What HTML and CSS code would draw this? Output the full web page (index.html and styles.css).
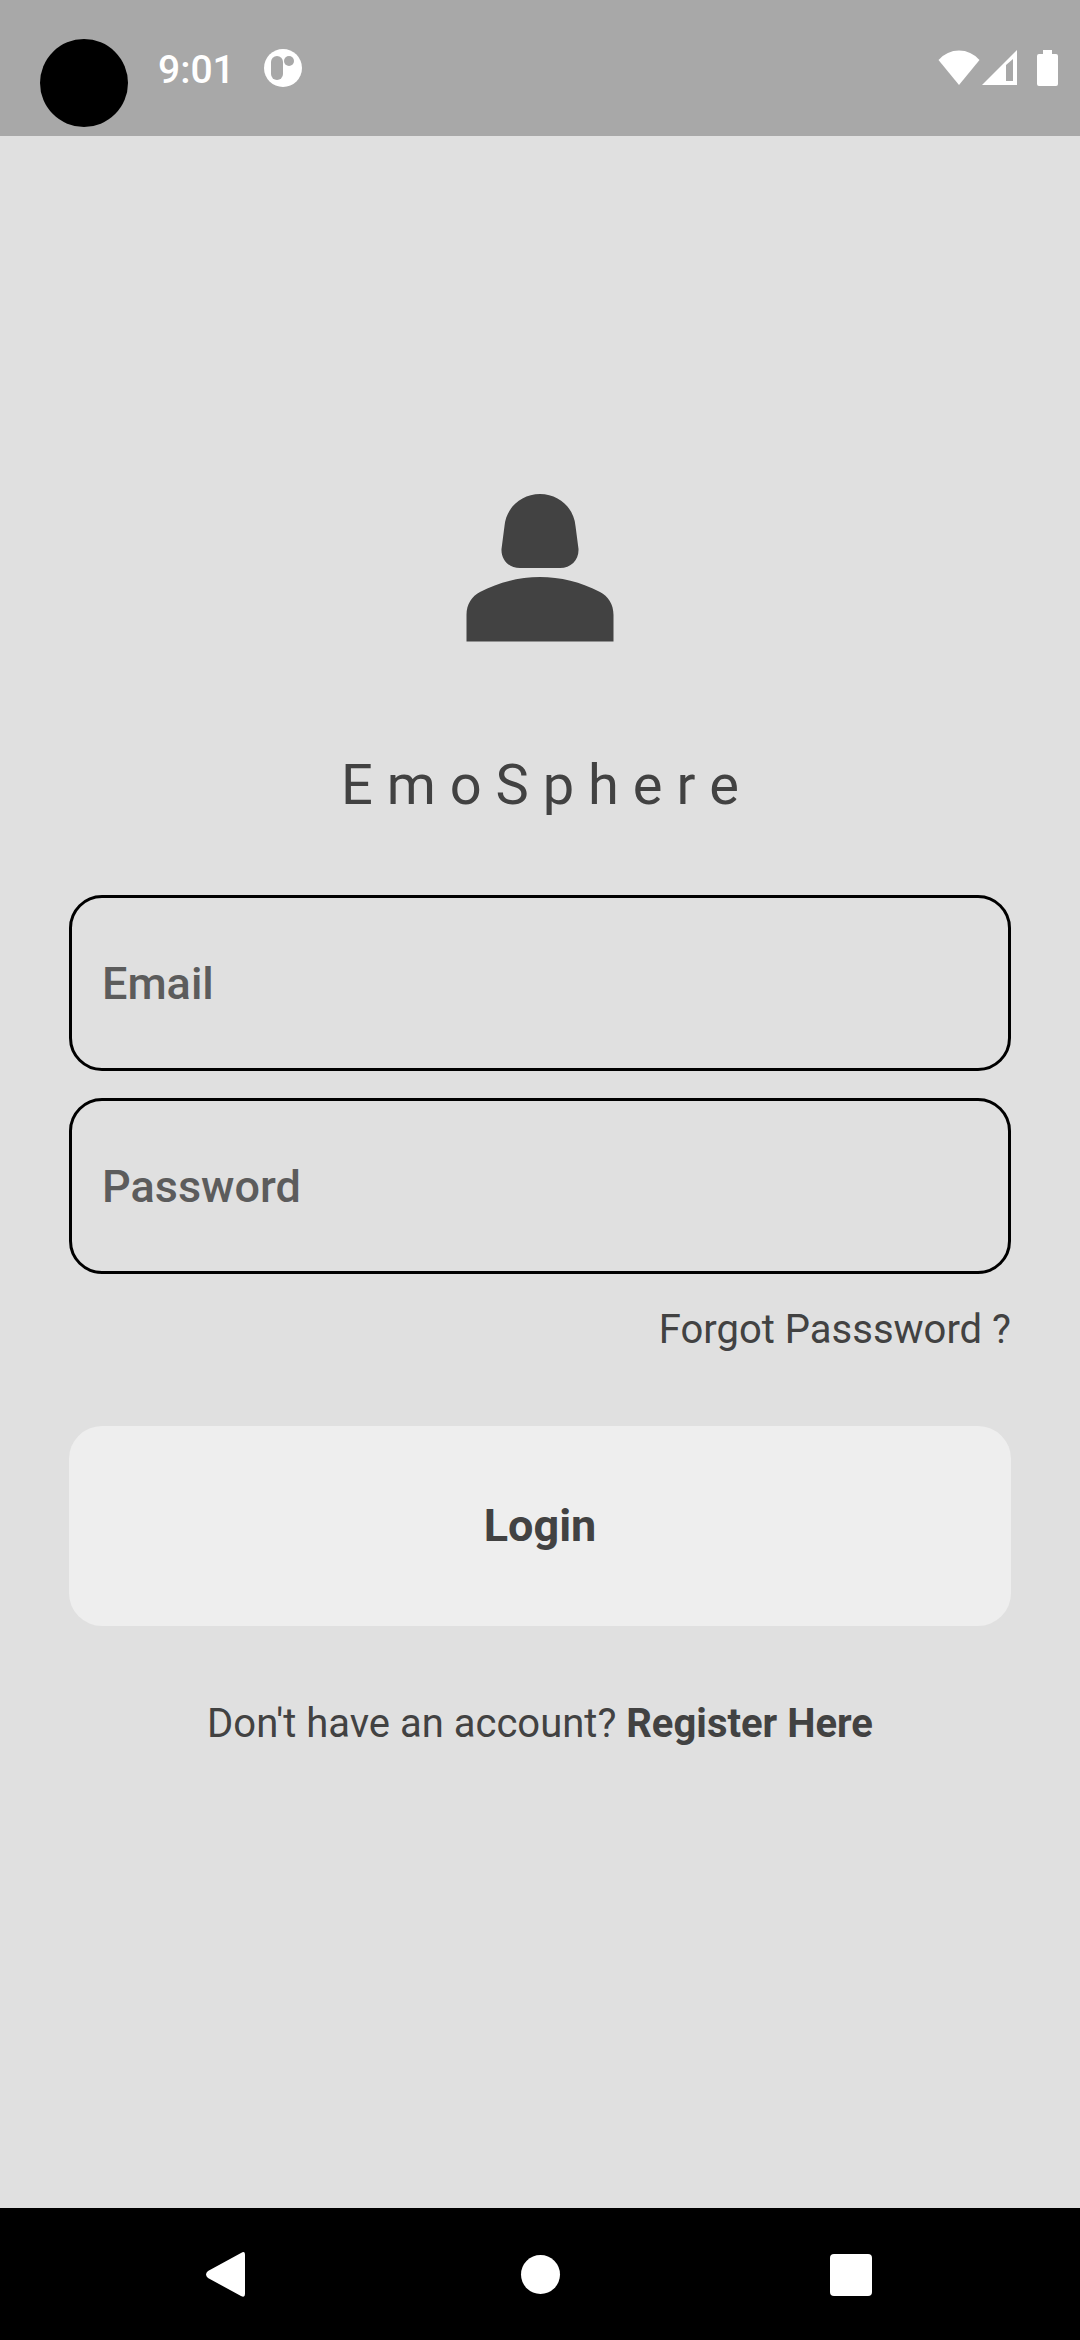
FILE: index.html
```html
<!DOCTYPE html>
<html lang="en">
<head>
<meta charset="utf-8">
<meta name="viewport" content="width=device-width, initial-scale=1">
<title>EmoSphere</title>
<link rel="stylesheet" href="styles.css">
</head>
<body>
<header class="status-bar">
  <div class="status-group">
    <span class="camera"></span>
    <time class="clock">9:01</time>
    <svg class="notice" viewBox="0 0 38 38" aria-hidden="true">
      <circle cx="19" cy="19" r="19" fill="#fff"/>
      <rect x="7" y="7" width="12" height="24" rx="6" fill="#a8a8a8"/>
      <circle cx="25" cy="12" r="5" fill="#a8a8a8"/>
    </svg>
  </div>
  <div class="status-group">
    <svg class="wifi" viewBox="0 0 42 36" fill="#fff" aria-hidden="true"><path d="M0.500 10Q9 0.500 21 0.500Q33 0.500 41.500 10L21 35Z"/></svg>
    <svg class="signal" viewBox="0 0 36 36" fill="#fff" fill-rule="evenodd" aria-hidden="true"><path d="M0 35L35 0V35ZM24 15V31H31V9Z"/></svg>
    <svg class="battery" viewBox="0 0 21 36" fill="#fff" aria-hidden="true"><path d="M6 0H15V4H19Q21 4 21 6V34Q21 36 19 36H2Q0 36 0 34V6Q0 4 2 4H6Z"/></svg>
  </div>
</header>

<main class="login">
  <svg class="avatar" viewBox="0 0 220 220" fill="#424242" aria-hidden="true">
    <path d="M110 36C91 36 76 50 74.500 68L71.500 91C71 102 79 110 90 110H130C141 110 149 102 148.500 91L145.500 68C144 50 129 36 110 36Z"/>
    <path d="M36.500 183.500V157C36.500 146 42 138 50 134C69 124 90 119 110 119C130 119 151 124 170 134C178 138 183.500 146 183.500 157V183.500Z"/>
  </svg>
  <h1 class="title">E m o S p h e r e</h1>
  <form class="form">
    <div class="fields">
      <input class="field" type="email" placeholder="Email" aria-label="Email">
      <input class="field" type="password" placeholder="Password" aria-label="Password">
    </div>
    <a class="forgot" href="#forgot">Forgot Passsword ?</a>
    <button class="submit" type="submit">Login</button>
  </form>
  <p class="register">Don't have an account? <a href="#register">Register Here</a></p>
</main>

<nav class="nav-bar">
  <button class="nav-button" aria-label="Back"><svg viewBox="0 0 46 46" fill="#fff"><path d="M2 20L35 2Q39 -1 39 4V43Q39 47 35 45L2 27Q-2 23.500 2 20Z"/></svg></button>
  <button class="nav-button" aria-label="Home"><svg viewBox="0 0 46 46" fill="#fff"><circle cx="23.500" cy="23.500" r="19.500"/></svg></button>
  <button class="nav-button" aria-label="Recent apps"><svg viewBox="0 0 46 46" fill="#fff"><rect x="2" y="3" width="42" height="42" rx="4"/></svg></button>
</nav>
</body>
</html>
```
FILE: styles.css
```css
* {
  box-sizing: border-box;
}

body {
  margin: 0;
  min-height: 100vh;
  display: flex;
  flex-direction: column;
  background: #e0e0e0;
  color: #424242;
  font-family: Roboto, sans-serif;
}

.status-bar {
  height: 136px;
  padding: 0 22px 0 40px;
  display: flex;
  justify-content: space-between;
  background: #a8a8a8;
}

.status-group {
  display: flex;
  align-items: center;
  height: 136px;
}

.camera {
  width: 88px;
  height: 88px;
  margin-top: 30px;
  border-radius: 50%;
  background: #000;
}

.clock {
  margin: 0 29px 0 30px;
  padding-top: 3px;
  color: #fff;
  font-size: 39px;
  font-weight: 500;
}

.notice {
  width: 38px;
  height: 38px;
}

.wifi {
  width: 42px;
  height: 36px;
}

.signal {
  width: 36px;
  height: 36px;
  margin: 0 19px 0 2px;
}

.battery {
  width: 21px;
  height: 36px;
}

.login {
  flex: 1;
  display: flex;
  flex-direction: column;
  align-items: center;
  padding: 322px 69px 0;
}

.avatar {
  width: 220px;
  height: 220px;
}

.title {
  margin: 74px 0 77px;
  font-size: 56px;
  font-weight: 400;
  line-height: 66px;
}

.form {
  width: 100%;
  display: flex;
  flex-direction: column;
}

.fields {
  display: flex;
  flex-direction: column;
  gap: 27px;
}

.field {
  width: 100%;
  height: 176px;
  padding: 0 30px;
  border: 3px solid #000;
  border-radius: 33px;
  background: transparent;
  color: #424242;
  font: 500 45px Roboto, sans-serif;
}

.field::placeholder {
  color: #5c5c5c;
  opacity: 1;
}

.forgot {
  align-self: flex-end;
  margin: 30px 0 70px;
  color: inherit;
  font-size: 40px;
  line-height: 52px;
  text-decoration: none;
}

.submit {
  height: 200px;
  padding: 0 0 2px;
  border: 0;
  border-radius: 33px;
  background: #eee;
  color: inherit;
  font: 700 45px Roboto, sans-serif;
}

.register {
  margin: 72px 0 0;
  font-size: 40px;
  line-height: 52px;
}

.register a {
  color: inherit;
  font-weight: 700;
  text-decoration: none;
}

.nav-bar {
  height: 132px;
  padding: 0 74px;
  display: flex;
  justify-content: space-between;
  background: #000;
}

.nav-button {
  flex: 1;
  display: flex;
  align-items: center;
  justify-content: center;
  padding: 0;
  border: 0;
  background: transparent;
}

.nav-button svg {
  width: 46px;
  height: 46px;
}
```
